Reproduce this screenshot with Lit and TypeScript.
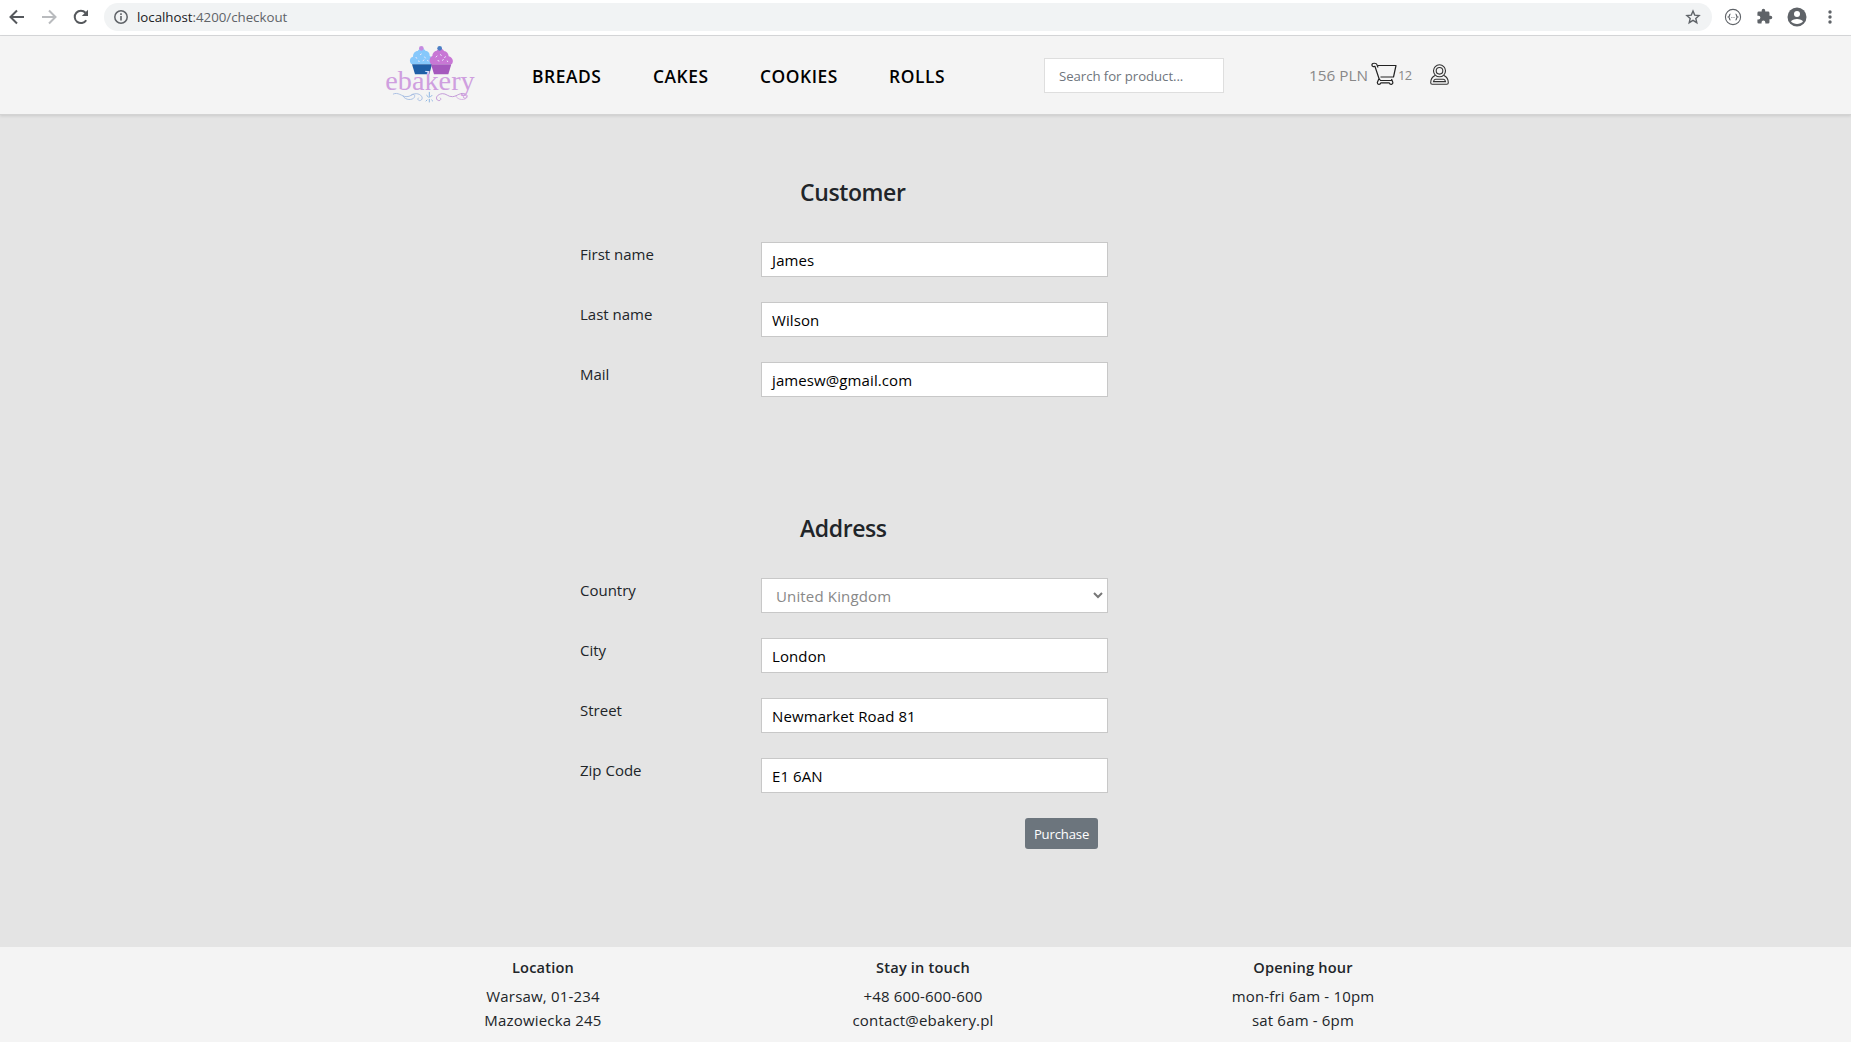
import { LitElement, html, css } from "lit";
import { customElement } from "lit/decorators.js";

@customElement("app-root")
export class AppRoot extends LitElement {
  static styles = css`
    :host { display: block; height: 1045px; background: #fff; font-family: "Open Sans", "Noto Sans", sans-serif; color: #212529; overflow: hidden; }
    * { box-sizing: border-box; }
    svg { display: block; flex: none; }
    .page { display: flex; flex-direction: column; height: 1042px; }
    .chrome { display: flex; align-items: center; height: 36px; padding: 0 0 2px 8px; border-bottom: 1px solid #d8d9db; background: #fff; flex: none; color: #5f6368; }
    .chrome .gap { margin-left: 14px; }
    .pill { display: flex; align-items: center; width: 1608px; height: 28px; margin-left: 14px; padding: 0 11px 0 9px; border-radius: 14px; background: #f1f3f4; }
    .url { font-size: 13.3px; line-height: 28px; margin-left: 8px; flex: 1; letter-spacing: -0.02px; }
    .url b { font-weight: 400; color: #202124; }
    .tools { display: flex; align-items: center; margin-left: 12px; }
    .nav { display: flex; align-items: center; height: 79px; padding-left: 380px; background: #f4f4f4; border-bottom: 1px solid #d3d3d3; box-shadow: 0 1px 3px rgba(0,0,0,.12); flex: none; position: relative; }
    .logo { align-self: flex-start; margin-top: 4px; }
    .links { display: flex; width: 512px; margin-left: 52px; font-size: 17.4px; font-weight: 600; letter-spacing: 0.55px; color: #000; padding-top: 2px; }
    .links span:nth-child(1) { width: 121px; }
    .links span:nth-child(2) { width: 107px; }
    .links span:nth-child(3) { width: 129px; }
    .search { width: 180px; height: 35px; border: 1px solid #dedede; background: #fff; padding: 1px 0 0 14px; font-size: 13.2px; line-height: 33px; letter-spacing: -0.05px; color: #6f767d; }
    .total { margin-left: 85px; font-size: 15.3px; color: #888; width: 62px; }
    .cart { margin-bottom: 3px; }
    .count { font-size: 12.8px; color: #888; margin-left: 1px; width: 32px; letter-spacing: -0.6px; }
    .user { margin-bottom: 1px; }
    .main { flex: 1; background: #e4e4e4; padding: 61px 0 0 580px; }
    h2 { margin: 0 0 34px 220px; font-size: 23px; font-weight: 600; line-height: 32px; letter-spacing: -0.4px; }
    .row { display: flex; height: 35px; margin-bottom: 25px; }
    label { width: 181px; font-size: 15px; line-height: 24px; }
    .field { width: 347px; height: 35px; border: 1px solid #c8c8c8; background: #fff; padding: 1px 5px 0 10px; font-size: 15px; line-height: 32px; letter-spacing: 0.1px; color: #000; }
    .select { display: flex; color: #888; padding-right: 3px; padding-left: 14px; justify-content: space-between; letter-spacing: 0.15px; }
    .select svg { margin-top: 11px; }
    .second { margin-top: 115px; }
    .btn { width: 73px; height: 31px; margin-left: 445px; border-radius: 3px; background: #6c757d; color: #fff; font-size: 13.1px; line-height: 32px; letter-spacing: -0.15px; text-align: center; }
    .footer { display: flex; height: 95px; background: #f4f4f4; padding: 8px 0 0 353px; flex: none; }
    .col { width: 380px; text-align: center; font-size: 15px; line-height: 24px; letter-spacing: 0.18px; }
    .col strong { display: block; font-weight: 600; font-size: 14.6px; margin-bottom: 5px; }
  `;

  private customer = [["First name", "James"], ["Last name", "Wilson"], ["Mail", "jamesw@gmail.com"]];
  private address = [["City", "London"], ["Street", "Newmarket Road 81"], ["Zip Code", "E1 6AN"]];

  private row([label, value]: string[]) {
    return html`<div class="row"><label>${label}</label><div class="field">${value}</div></div>`;
  }

  private logo() {
    return html`<svg class="logo" width="100" height="67" viewBox="30 30 300 201">
      <path d="M126 103h60l-8 30h-43z" fill="#1f5fa6" />
      <path d="M183 103h61l-9 30h-43z" fill="#a558bd" />
      <path d="M124 102c-7-8-5-20 5-22 0-10 6-17 14-17 5-9 19-9 23-1 9 1 14 8 13 16 9 3 11 15 4 24z" fill="#86c8fb" />
      <path d="M183 102c-7-8-5-20 4-24 0-9 6-15 13-16 5-8 19-7 22 1 8 1 14 8 14 16 12 3 16 15 10 23z" fill="#c877d5" />
      <circle cx="154" cy="55" r="7" fill="#c58be0" /><circle cx="209" cy="55" r="7" fill="#4b7fc4" />
      <g stroke="#e9e7fb" stroke-width="3" stroke-linecap="round">
        <path d="M138 82l2 3M151 74l3-2M164 81l2 3M145 93l3 1M159 92l3-2M173 91l1 2M198 81l3-3M211 74l3 2M224 83l2-3M204 92l3 1M217 91l3-2M232 93l1 2" />
      </g>
      <text x="46" y="179" textLength="268" lengthAdjust="spacingAndGlyphs" font-family="Liberation Serif, serif" font-size="84" fill="#cf9fdf">ebakery</text>
      <circle cx="285" cy="200" r="5" fill="none" stroke="#cf9fdf" stroke-width="3" />
      <path d="M166 124l10 1-3 8" fill="none" stroke="#cfe5fb" stroke-width="3" />
      <g fill="none" stroke-width="2.5" stroke-linecap="round">
        <path d="M70 192c14-7 25 7 38 8 14 1 19-10 31-9 14 1 22 12 15 19-6 5-14-1-9-6M99 198c7 14 29 13 34 4 4-7-4-13-9-7" stroke="#9db7e0" />
        <path d="M286 192c-14-7-25 7-38 8-14 1-19-10-31-9-14 1-22 12-15 19 6 5 14-1 9-6" stroke="#b98ad2" />
        <path d="M257 198c7 14 29 13 34 4 4-7-4-13-9-7" stroke="#d3abe2" />
        <path d="M178 187v14M178 208v8M170 196l5 5M186 196l-5 5M171 210l-3 3M185 210l3 3" stroke="#7ba9de" />
      </g>
    </svg>`;
  }

  render() {
    return html`<div class="page">
      <div class="chrome">
        <svg width="18" height="18" viewBox="0 0 18 18" fill="none" stroke="#55585c" stroke-width="2"><path d="M16 9H3M9 2.500L2.500 9 9 15.500" /></svg>
        <svg class="gap" width="18" height="18" viewBox="0 0 18 18" fill="none" stroke="#b9bbbe" stroke-width="2"><path d="M2 9h13M9 2.500L15.500 9 9 15.500" /></svg>
        <svg class="gap" width="18" height="18" viewBox="0 0 18 18"><path d="M14.200 12.200A6.200 6.200 0 1 1 13.500 4.700" fill="none" stroke="#55585c" stroke-width="2" /><path d="M16 1.800V8H9.800z" fill="#55585c" /></svg>
        <div class="pill">
          <svg width="16" height="16" viewBox="0 0 16 16"><circle cx="8" cy="8" r="6.200" fill="none" stroke="#5f6368" stroke-width="1.500" /><path d="M7.200 7h1.600v4.500H7.200zM7.200 4.300h1.600v1.600H7.200z" fill="#5f6368" /></svg>
          <span class="url"><b>localhost</b>:4200/checkout</span>
          <svg width="16" height="16" viewBox="0 0 16 16" fill="none" stroke="#5f6368" stroke-width="1.400"><path d="M8 2l1.700 4.100 4.400.4-3.300 2.900 1 4.300L8 11.400l-3.800 2.300 1-4.300L1.900 6.500l4.400-.4z" /></svg>
        </div>
        <div class="tools">
          <svg width="18" height="18" viewBox="0 0 18 18" fill="none" stroke="#5f6368"><circle cx="9" cy="9" r="7.600" stroke-width="1.100" /><path d="M6.500 6C5 6 6 8.500 4.500 9 6 9.500 5 12 6.500 12M11.500 6c1.500 0 .5 2.500 2 3-1.500.5-.5 3-2 3M7.500 9.500h.8M9.600 9.500h.8" stroke-width="1.200" /></svg>
          <svg class="gap" width="17" height="17" viewBox="0 0 24 24" fill="#5f6368"><path d="M20.500 11H19V7a2 2 0 0 0-2-2h-4V3.500a2.500 2.500 0 0 0-5 0V5H4a2 2 0 0 0-2 2v3.800h1.500a2.700 2.700 0 0 1 0 5.400H2V20a2 2 0 0 0 2 2h3.800v-1.500a2.700 2.700 0 0 1 5.400 0V22H17a2 2 0 0 0 2-2v-4h1.500a2.500 2.500 0 0 0 0-5z" /></svg>
          <svg class="gap" width="20" height="20" viewBox="0 0 20 20"><circle cx="10" cy="10" r="9.500" fill="#5f6368" /><circle cx="10" cy="7" r="3" fill="#fff" /><path d="M4 14.500c1-3.500 11-3.500 12 0-2.500 3.300-9.500 3.300-12 0z" fill="#fff" /></svg>
          <svg class="gap" width="18" height="18" viewBox="0 0 18 18" fill="#5f6368"><circle cx="9" cy="4" r="1.700" /><circle cx="9" cy="9" r="1.700" /><circle cx="9" cy="14" r="1.700" /></svg>
        </div>
      </div>
      <div class="nav">
        ${this.logo()}
        <div class="links"><span>BREADS</span><span>CAKES</span><span>COOKIES</span><span>ROLLS</span></div>
        <div class="search">Search for product...</div>
        <div class="total">156 PLN</div>
        <svg class="cart" width="26" height="24" viewBox="0 0 26 24" fill="none" stroke="#222" stroke-width="1.200" stroke-linejoin="round"><path d="M7 5.500L6 2.700C5.500 1 1 .5.900 3c0 1.500 1.800 2 3 1.300L8 16.500 6.300 20.500c0 2.500 3 2.500 3.500.3h8.500c.5 2.200 4 2 3.500-.5L20.500 17M7 3.500h18L22.500 15H9.500M8 16.500l1.500 2h11" /></svg>
        <div class="count">12</div>
        <svg class="user" width="19" height="21" viewBox="0 0 19 21" fill="none" stroke="#333" stroke-width="1.100"><circle cx="9.500" cy="6.800" r="6" /><circle cx="9.500" cy="6.800" r="3.300" /><path d="M5 11.500c-3 1.500-4.300 4-4.300 7.200 0 1 .6 1.500 1.500 1.500h14.600c.9 0 1.500-.5 1.500-1.500 0-3.200-1.300-5.700-4.300-7.200M3.500 17.600c.3-1.500 1-2.300 2-2.300h8c1 0 1.700.8 2 2.300z" /></svg>
      </div>
      <div class="main">
        <h2>Customer</h2>
        ${this.customer.map((r) => this.row(r))}
        <h2 class="second">Address</h2>
        <div class="row"><label>Country</label><div class="field select"><span>United Kingdom</span>
          <svg width="12" height="9" viewBox="0 0 12 9" fill="none" stroke="#777" stroke-width="2"><path d="M2 2l4 4 4-4" /></svg></div></div>
        ${this.address.map((r) => this.row(r))}
        <div class="btn">Purchase</div>
      </div>
      <div class="footer">
        <div class="col"><strong>Location</strong>Warsaw, 01-234<br />Mazowiecka 245</div>
        <div class="col"><strong>Stay in touch</strong>+48 600-600-600<br />contact@ebakery.pl</div>
        <div class="col"><strong>Opening hour</strong>mon-fri 6am - 10pm<br />sat 6am - 6pm</div>
      </div>
    </div>`;
  }
}
